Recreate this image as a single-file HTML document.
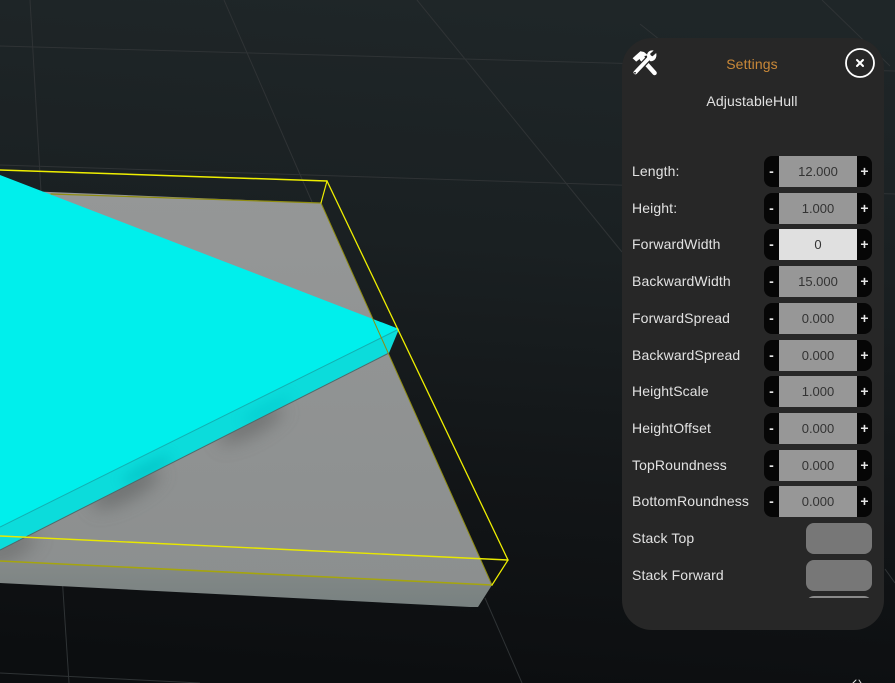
<!DOCTYPE html>
<html>
<head>
<meta charset="utf-8">
<style>
html,body{margin:0;padding:0;width:895px;height:683px;overflow:hidden;background:#111416;font-family:"Liberation Sans",Arial,sans-serif}
#scene{position:absolute;left:0;top:0}
#panel{position:absolute;left:622px;top:38px;width:262px;height:592px;border-radius:30px;background:#272727}
.t{position:absolute;white-space:nowrap;line-height:16px;font-size:14px;color:#e2e2e2;letter-spacing:.12px}
.row{position:absolute;left:0;width:262px;height:31px}
.row .t{left:10px;top:7px}
.st{position:absolute;left:142px;top:0;width:108px;height:31px;background:#060606;border-radius:8px}
.st b{position:absolute;top:0;width:15px;height:31px;line-height:31px;text-align:center;color:#e6e6e6;font-size:14px;font-weight:bold}
.st i{position:absolute;left:15px;top:0;width:78px;height:31px;background:#979797;color:#333;font-style:normal;font-size:13px;line-height:31px;text-align:center}
.btn{position:absolute;left:184px;width:66px;height:31px;border-radius:8px;background:#777}
</style>
</head>
<body>
<svg id="scene" width="895" height="683" viewBox="0 0 895 683" xmlns="http://www.w3.org/2000/svg">
<defs>
<linearGradient id="bg" x1="0.55" y1="0" x2="0.45" y2="1">
<stop offset="0" stop-color="#1f2628"/>
<stop offset="0.35" stop-color="#1a2022"/>
<stop offset="0.7" stop-color="#121517"/>
<stop offset="1" stop-color="#0c0e10"/>
</linearGradient>
<linearGradient id="top" x1="0" y1="0" x2="0" y2="1">
<stop offset="0" stop-color="#959797"/>
<stop offset="1" stop-color="#8c8f8f"/>
</linearGradient>
<linearGradient id="front" x1="0" y1="0" x2="0" y2="1">
<stop offset="0" stop-color="#858a89"/>
<stop offset="1" stop-color="#788180"/>
</linearGradient>
<filter id="b1" x="-60%" y="-150%" width="220%" height="400%"><feGaussianBlur stdDeviation="9"/></filter>
<filter id="b2" x="-60%" y="-150%" width="220%" height="400%"><feGaussianBlur stdDeviation="6"/></filter>
<clipPath id="cg"><polygon points="0,190 321,203 492,585 0,561"/></clipPath>
<clipPath id="cs"><polygon points="0,527 399,329 389,353 0,550"/></clipPath>
</defs>
<rect width="895" height="683" fill="url(#bg)"/>
<g stroke="#2f3335" stroke-width="1" fill="none">
<line x1="0" y1="46" x2="895" y2="71"/>
<line x1="0" y1="165" x2="895" y2="194"/>
<line x1="30" y1="0" x2="41" y2="192"/>
<line x1="224" y1="0" x2="312" y2="202"/>
<line x1="417" y1="0" x2="622" y2="252"/>
<line x1="640" y1="24" x2="660" y2="40"/>
<line x1="822" y1="0" x2="890" y2="66"/>
<line x1="885" y1="569" x2="895" y2="583"/>
<line x1="62" y1="575" x2="69" y2="683"/>
<line x1="0" y1="673" x2="200" y2="683"/>
<line x1="485" y1="598" x2="522" y2="683"/>
</g>
<polygon points="0,561 492,585 478,607 470,607 0,583" fill="url(#front)"/>
<polygon points="0,190 321,203 492,585 0,561" fill="url(#top)"/>
<g clip-path="url(#cg)">
<ellipse cx="250" cy="424" rx="36" ry="11" fill="#666868" opacity=".75" transform="rotate(-27 250 424)" filter="url(#b1)"/>
<ellipse cx="125" cy="488" rx="38" ry="12" fill="#646666" opacity=".75" transform="rotate(-27 125 488)" filter="url(#b1)"/>
<ellipse cx="8" cy="548" rx="30" ry="12" fill="#6a6c6c" opacity=".7" transform="rotate(-27 8 548)" filter="url(#b1)"/>
</g>
<polygon points="0,527 399,329 389,353 0,550" fill="#0cdcdb"/>
<g clip-path="url(#cs)">
<ellipse cx="147" cy="470" rx="28" ry="6" fill="#00bcc0" opacity=".7" transform="rotate(-27 147 470)" filter="url(#b2)"/>
<ellipse cx="267" cy="410" rx="28" ry="5" fill="#00c8cc" opacity=".7" transform="rotate(-27 267 410)" filter="url(#b2)"/>
</g>
<polygon points="0,175 399,329 0,527" fill="#00efec"/>
<line x1="0" y1="527" x2="399" y2="329" stroke="#12b0b2" stroke-width="1"/>
<line x1="0" y1="550" x2="389" y2="353" stroke="#4f6a6b" stroke-width="1"/>
<g fill="none" stroke-linecap="round">
<line x1="51" y1="194" x2="321" y2="203" stroke="#8f8c10" stroke-width="1.2"/>
<line x1="0" y1="561" x2="492" y2="585" stroke="#a5a50e" stroke-width="1.6"/>
<line x1="321" y1="203" x2="492" y2="585" stroke="#8f8c10" stroke-width="1"/>
<line x1="0" y1="536" x2="508" y2="560" stroke="#e8e800" stroke-width="1.4"/>
<line x1="0" y1="170" x2="327" y2="181" stroke="#efef00" stroke-width="1.5"/>
<line x1="327" y1="181" x2="508" y2="560" stroke="#efef00" stroke-width="1.3"/>
<line x1="327" y1="181" x2="321" y2="203" stroke="#efef00" stroke-width="1.2"/>
<line x1="508" y1="560" x2="492" y2="585" stroke="#efef00" stroke-width="1.2"/>
<path d="M853 683L856 680M859 680L861 683" stroke="#ddd" stroke-width="1"/>
</g>
</svg>
<div id="panel">
<svg style="position:absolute;left:9px;top:11px" width="27" height="28" viewBox="0 0 27 28" xmlns="http://www.w3.org/2000/svg">
<path d="M1.6 9.2L9.4 2.2L13 3L17 6.4L13.4 7L14.6 10.4L11.6 13.2L8.6 10L5.2 12.6Z" fill="#fff"/>
<line x1="11" y1="10" x2="23.6" y2="24" stroke="#fff" stroke-width="4.4" stroke-linecap="round"/>
<line x1="19" y1="8" x2="4.2" y2="23.6" stroke="#272727" stroke-width="6.2"/>
<line x1="19" y1="8" x2="4.4" y2="23.4" stroke="#fff" stroke-width="3.8" stroke-linecap="round"/>
<circle cx="4" cy="23.8" r="0.9" fill="#272727"/>
<path d="M25.2 4L21.6 7.2L19.6 6.8L19.2 4.6L22.6 1.6C19.4 .8 15.8 3 16 7L16.4 9.4L19.4 12.2C22.8 12.6 26.4 9.4 25.2 4Z" fill="#fff"/>
</svg>
<div class="t" style="left:0;width:260px;text-align:center;top:18px;color:#c98838">Settings</div>
<svg style="position:absolute;left:222px;top:10px" width="32" height="32" viewBox="0 0 32 32" xmlns="http://www.w3.org/2000/svg">
<circle cx="16" cy="15" r="14" fill="none" stroke="#fff" stroke-width="1.8"/>
<path d="M13 12L19 18M19 12L13 18" stroke="#fff" stroke-width="2" stroke-linecap="round"/>
</svg>
<div class="t" style="left:0;width:260px;text-align:center;top:55px">AdjustableHull</div>

<div class="row" style="top:118px"><div class="t">Length:</div><div class="st"><b style="left:0">-</b><i>12.000</i><b style="right:0">+</b></div></div>
<div class="row" style="top:155px"><div class="t">Height:</div><div class="st"><b style="left:0">-</b><i>1.000</i><b style="right:0">+</b></div></div>
<div class="row" style="top:191px"><div class="t">ForwardWidth</div><div class="st"><b style="left:0">-</b><i style="background:#e0e0e0">0</i><b style="right:0">+</b></div></div>
<div class="row" style="top:228px"><div class="t">BackwardWidth</div><div class="st"><b style="left:0">-</b><i>15.000</i><b style="right:0">+</b></div></div>
<div class="row" style="top:265px"><div class="t">ForwardSpread</div><div class="st"><b style="left:0">-</b><i>0.000</i><b style="right:0">+</b></div></div>
<div class="row" style="top:302px"><div class="t">BackwardSpread</div><div class="st"><b style="left:0">-</b><i>0.000</i><b style="right:0">+</b></div></div>
<div class="row" style="top:338px"><div class="t">HeightScale</div><div class="st"><b style="left:0">-</b><i>1.000</i><b style="right:0">+</b></div></div>
<div class="row" style="top:375px"><div class="t">HeightOffset</div><div class="st"><b style="left:0">-</b><i>0.000</i><b style="right:0">+</b></div></div>
<div class="row" style="top:412px"><div class="t">TopRoundness</div><div class="st"><b style="left:0">-</b><i>0.000</i><b style="right:0">+</b></div></div>
<div class="row" style="top:448px"><div class="t">BottomRoundness</div><div class="st"><b style="left:0">-</b><i>0.000</i><b style="right:0">+</b></div></div>
<div class="row" style="top:485px"><div class="t">Stack Top</div><div class="btn" style="top:0"></div></div>
<div class="row" style="top:522px"><div class="t">Stack Forward</div><div class="btn" style="top:0"></div></div>
<div style="position:absolute;left:184px;top:558px;width:66px;height:2px;overflow:hidden"><div style="width:66px;height:31px;border-radius:8px;background:#8a8a8a"></div></div>
</div>
</body>
</html>
